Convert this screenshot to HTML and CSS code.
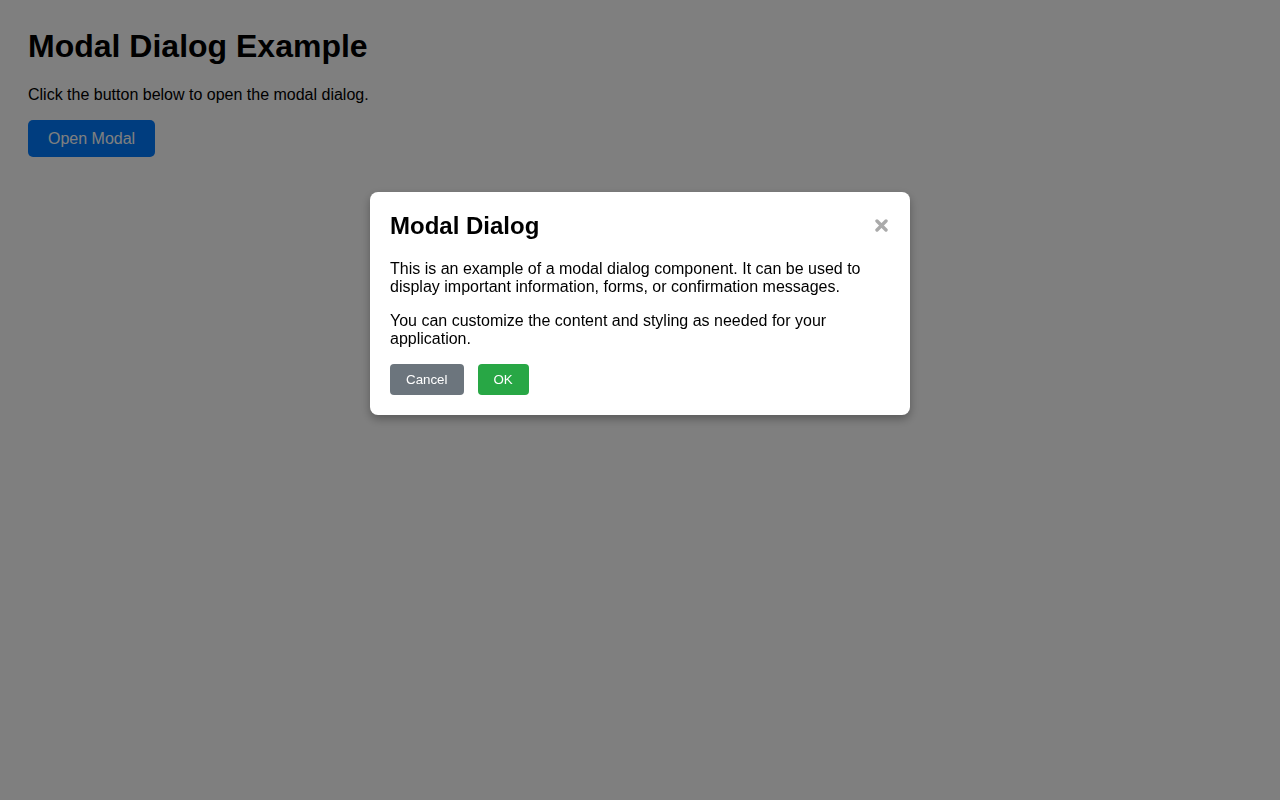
FILE: index.html
```html
<!DOCTYPE html>
<html lang="en">

  <head>
    <meta charset="UTF-8">
    <meta name="viewport" content="width=device-width, initial-scale=1.0">
    <title>Modal Dialog Example</title>
    <link rel="stylesheet" href="styles.css">
  </head>

  <body>
    <h1>Modal Dialog Example</h1>
    <p>Click the button below to open the modal dialog.</p>
    <button class="open-btn" onclick="openModal()">Open Modal</button>

    <div class="modal-overlay open" id="modal">
      <div class="modal">
        <div class="modal-header">
          <h2>Modal Dialog</h2>
          <button class="close-btn" onclick="closeModal()" aria-label="Close">
            <svg width="13" height="13" viewBox="0 0 13 13">
              <path d="M2 2 L11 11 M11 2 L2 11" stroke="#aaa" stroke-width="3.4" stroke-linecap="round" />
            </svg>
          </button>
        </div>
        <p>This is an example of a modal dialog component. It can be used to display important information, forms, or confirmation messages.</p>
        <p>You can customize the content and styling as needed for your application.</p>
        <div class="modal-actions">
          <button class="btn btn-cancel" onclick="closeModal()">Cancel</button>
          <button class="btn btn-ok" onclick="closeModal()">OK</button>
        </div>
      </div>
    </div>

    <script>
      function openModal() {
        document.getElementById('modal').classList.add('open');
      }

      function closeModal() {
        document.getElementById('modal').classList.remove('open');
      }
    </script>
  </body>

</html>
```

FILE: styles.css
```css
body {
  margin: 8px;
  padding: 20px;
  font-family: "Liberation Sans", Arial, sans-serif;
  color: #000;
  background: #fff;
}

h1 {
  margin: 0 0 21px;
  font-size: 32px;
}

p {
  margin: 16px 0;
  font-size: 16px;
}

.open-btn {
  padding: 9.5px 20px;
  border: none;
  border-radius: 5px;
  background-color: #007bff;
  color: #fff;
  font-family: inherit;
  font-size: 16px;
  cursor: pointer;
}

.modal-overlay {
  display: none;
  position: fixed;
  inset: 0;
  background-color: rgba(0, 0, 0, 0.5);
}

.modal-overlay.open {
  display: block;
}

.modal {
  width: 500px;
  margin: 192px auto 0;
  padding: 20px;
  background: #fff;
  border-radius: 8px;
  box-shadow: 0 4px 10px rgba(0, 0, 0, 0.3);
}

.modal-header {
  display: flex;
  align-items: center;
  justify-content: space-between;
  margin-bottom: 20px;
}

.modal-header h2 {
  margin: 0;
  font-size: 24px;
}

.modal .modal-header + p {
  margin-top: 0;
}

.close-btn {
  display: flex;
  padding: 0;
  margin: -2px 2px 0 0;
  border: none;
  background: none;
  cursor: pointer;
}

.modal-actions {
  display: flex;
  gap: 14px;
}

.btn {
  padding: 8px 16px;
  border: none;
  border-radius: 4px;
  color: #fff;
  font-family: inherit;
  font-size: 13.33px;
  line-height: 15px;
  cursor: pointer;
}

.btn-cancel {
  background-color: #6c757d;
}

.btn-ok {
  background-color: #28a745;
}
```
